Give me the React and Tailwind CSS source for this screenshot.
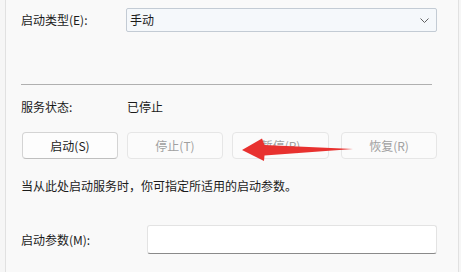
import React from "react";

const font = { fontFamily: '"Noto Sans CJK SC", "Noto Sans", sans-serif' };

function Btn({ children, disabled, className = "" }) {
  return (
    <div
      className={
        "h-[27px] flex items-center justify-center rounded-[4px] text-[12px] " +
        (disabled
          ? "border border-[#e6e6e6] bg-[#fbfbfb] text-[#a0a0a0] "
          : "border border-[#d4d4d4] border-b-[#bfbfbf] bg-[#fdfdfd] text-[#1b1b1b] ") +
        className
      }
    >
      {children}
    </div>
  );
}

export default function App() {
  return (
    <div className="w-[461px] h-[272px] bg-[#f6f6f6] overflow-hidden" style={font}>
      <div className="relative ml-[5px] w-[454px] h-[272px] border-x border-[#e1e1e1] bg-[#f9f9f9] text-[12px] text-[#1b1b1b] leading-[16px]">
        <div className="pl-[15px] pt-[8px] flex items-center">
          <div className="w-[105px]">启动类型(E):</div>
          <div className="w-[311px] h-[24px] border border-[#c3cbd4] bg-[#f5f8fb] rounded-[2px] flex items-center justify-between pl-[3px] pr-[7px]">
            <span>手动</span>
            <svg width="9" height="5" viewBox="0 0 9 5" fill="none">
              <path d="M0.5 0.5 L4.5 4.5 L8.5 0.5" stroke="#606060" strokeWidth="1" />
            </svg>
          </div>
        </div>

        <div className="ml-[15px] mt-[52px] w-[411px] h-px bg-[#b0b0b0]" />

        <div className="pl-[15px] mt-[14px] flex">
          <div className="w-[106px]">服务状态:</div>
          <div>已停止</div>
        </div>

        <div className="pl-[16px] mt-[17px] flex">
          <Btn className="w-[96px]">启动(S)</Btn>
          <Btn disabled className="w-[96px] ml-[9px]">停止(T)</Btn>
          <Btn disabled className="w-[97px] ml-[9px]">暂停(P)</Btn>
          <Btn disabled className="w-[96px] ml-[12px]">恢复(R)</Btn>
        </div>

        <div className="pl-[15px] mt-[19px]">当从此处启动服务时，你可指定所适用的启动参数。</div>

        <div className="pl-[15px] mt-[31px] flex items-center">
          <div className="w-[126px]">启动参数(M):</div>
          <div className="w-[290px] h-[29px] bg-white border border-[#e3e3e3] border-b-[#8a8a8a] rounded-[3px]" />
        </div>

        <svg
          className="absolute left-[225px] top-[135px]"
          width="130"
          height="30"
          viewBox="225 135 130 30"
        >
          <path
            d="M236 150 L256 138.5 L258.5 145 L347 149 L258.5 155.5 L258 161 Z"
            fill="#e8312f"
          />
        </svg>
      </div>
    </div>
  );
}
